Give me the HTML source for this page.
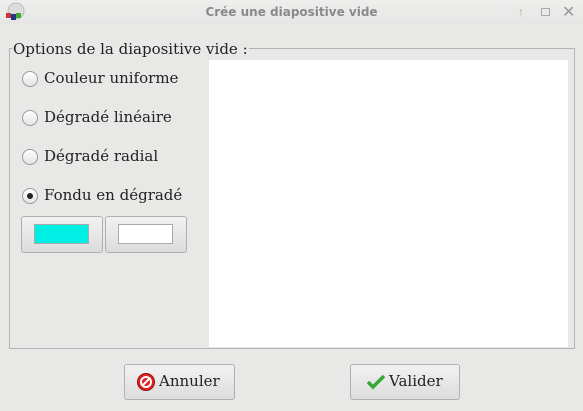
<!DOCTYPE html>
<html><head><style>
body{margin:0;width:583px;height:411px;background:#e8e8e7;position:relative;overflow:hidden;font-family:"DejaVu Serif","Liberation Serif",serif;color:#222}
.abs{position:absolute}
.title{left:0;top:0;width:583px;height:24px;background:linear-gradient(#eeeeed,#e6e6e5)}
.tt{left:0;width:583px;top:5px;text-align:center;font:bold 12px "DejaVu Sans","Liberation Sans",sans-serif;color:#8a8a8a}
.grp{left:9px;top:48px;width:564px;height:299px;border:1px solid #b4b4b4}
.leg{left:12px;top:40px;background:#e8e8e7;font-size:15px;padding:0 1px}
.white{left:209px;top:60px;width:359px;height:287px;background:#fff}
.rad{left:22px;width:14px;height:14px;border:1px solid #9a9a9a;border-radius:50%;background:linear-gradient(#fff,#e4e4e4)}
.lab{left:44px;font-size:15px}
.btn{border:1px solid #b0b0b0;border-radius:3px;background:linear-gradient(#f2f2f2,#dcdcdc)}
</style></head><body>
<div class="abs title"></div>
<div class="abs tt">Crée une diapositive vide</div>
<svg class="abs" style="left:3px;top:2px" width="24" height="22"><circle cx="13" cy="9" r="8" fill="#ddd" stroke="#bbb"/><rect x="3" y="11" width="5" height="5" fill="#c33"/><rect x="8" y="12" width="5" height="6" fill="#238"/><rect x="13" y="11" width="5" height="5" fill="#3a3"/></svg>
<div class="abs" style="left:518px;top:5px;color:#aaa;font:bold 12px sans-serif">↑</div>
<div class="abs" style="left:541px;top:8px;width:7px;height:6px;border:1px solid #aaa"></div>
<div class="abs" style="left:562px;top:2px;color:#999;font:16px sans-serif">✕</div>
<div class="abs grp"></div>
<div class="abs leg">Options de la diapositive vide :</div>
<div class="abs white"></div>
<div class="abs rad" style="top:71px"></div><div class="abs lab" style="top:69px">Couleur uniforme</div>
<div class="abs rad" style="top:110px"></div><div class="abs lab" style="top:108px">Dégradé linéaire</div>
<div class="abs rad" style="top:149px"></div><div class="abs lab" style="top:147px">Dégradé radial</div>
<div class="abs rad" style="top:188px"></div><div class="abs" style="left:27px;top:193px;width:6px;height:6px;border-radius:50%;background:#222"></div><div class="abs lab" style="top:186px">Fondu en dégradé</div>
<div class="abs btn" style="left:21px;top:216px;width:80px;height:35px"></div>
<div class="abs" style="left:34px;top:224px;width:53px;height:18px;background:#00efe5;border:1px solid #aaa"></div>
<div class="abs btn" style="left:105px;top:216px;width:80px;height:35px"></div>
<div class="abs" style="left:118px;top:224px;width:53px;height:18px;background:#fff;border:1px solid #aaa"></div>
<div class="abs btn" style="left:124px;top:364px;width:109px;height:34px"></div>
<svg class="abs" style="left:136px;top:372px" width="20" height="20"><circle cx="10" cy="10" r="8.5" fill="#d22" stroke="#911"/><circle cx="10" cy="10" r="5" fill="none" stroke="#fff" stroke-width="2"/><line x1="6" y1="14" x2="14" y2="6" stroke="#fff" stroke-width="2"/></svg>
<div class="abs" style="left:159px;top:372px;font-size:15px">Annuler</div>
<div class="abs btn" style="left:350px;top:364px;width:108px;height:34px"></div>
<svg class="abs" style="left:366px;top:374px" width="20" height="16"><path d="M2 8 L7 13 L18 2" fill="none" stroke="#3a3" stroke-width="3.5"/></svg>
<div class="abs" style="left:389px;top:372px;font-size:15px">Valider</div>
</body></html>
